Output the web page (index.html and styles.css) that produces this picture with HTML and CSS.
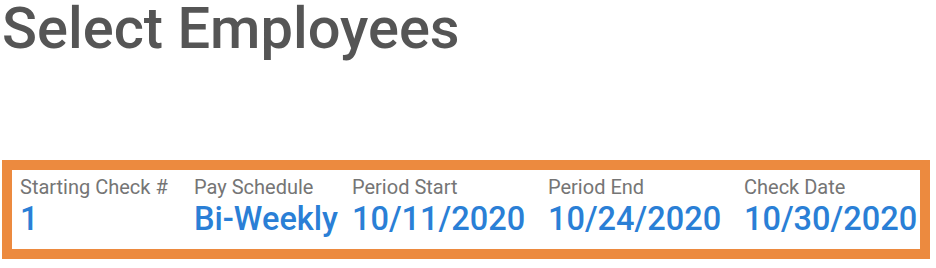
FILE: index.html
```html
<!DOCTYPE html>
<html>
<head>
<meta charset="utf-8">
<link rel="stylesheet" href="styles.css">
</head>
<body>
<div class="page">
  <h1 class="title">Select Employees</h1>
  <div class="summary">
    <div class="field f1">
      <div class="label">Starting Check #</div>
      <div class="value">1</div>
    </div>
    <div class="field f2">
      <div class="label">Pay Schedule</div>
      <div class="value">Bi-Weekly</div>
    </div>
    <div class="field f3">
      <div class="label">Period Start</div>
      <div class="value">10/11/2020</div>
    </div>
    <div class="field f4">
      <div class="label">Period End</div>
      <div class="value">10/24/2020</div>
    </div>
    <div class="field f5">
      <div class="label">Check Date</div>
      <div class="value">10/30/2020</div>
    </div>
  </div>
</div>
</body>
</html>
```
FILE: styles.css
```css
html, body {
  margin: 0;
  padding: 0;
  background: #ffffff;
}
.page {
  font-family: Roboto, "Liberation Sans", sans-serif;
  padding: 0 6px 0 2px;
}
.title {
  margin: 0;
  height: 160px;
  font-size: 57.8px;
  font-weight: 500;
  line-height: 56px;
  color: #555555;
}
.summary {
  display: flex;
  border: 10px solid #ec8a3f;
  padding: 5px 0 0 8px;
  height: 74px;
  box-sizing: content-box;
}
.field {
  display: flex;
  flex-direction: column;
}
.f1 { width: 174px; }
.f2 { width: 158px; }
.f3 { width: 196px; }
.f4 { width: 196px; }
.label {
  font-size: 20px;
  line-height: 24px;
  color: #757575;
}
.value {
  font-size: 32.5px;
  font-weight: 500;
  line-height: 40px;
  color: #2a7fd6;
}
```
